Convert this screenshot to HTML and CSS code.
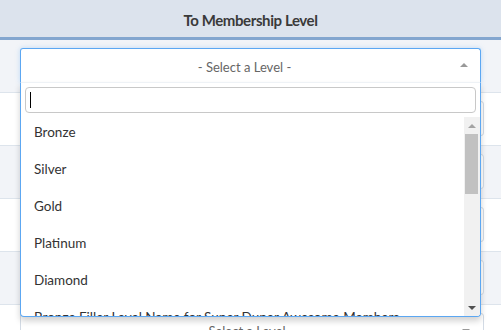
FILE: index.html
```html
<!DOCTYPE html>
<html>
<head>
<meta charset="utf-8">
<link rel="stylesheet" href="styles.css">
</head>
<body>
<div class="header">To Membership Level</div>
<div class="rows">
  <div class="row shaded">
    <div class="select open">
      <div class="selection"><span class="placeholder">- Select a Level -</span><span class="arrow up"></span></div>
      <div class="dropdown">
        <div class="search-wrap"><div class="search"><span class="caret"></span></div></div>
        <div class="results">
          <ul class="options">
            <li>Bronze</li>
            <li>Silver</li>
            <li>Gold</li>
            <li>Platinum</li>
            <li>Diamond</li>
            <li>Bronze Filler Level Name for Super Duper Awesome Members</li>
          </ul>
          <div class="scrollbar">
            <div class="sb-btn"><span class="tri-up"></span></div>
            <div class="sb-track"><div class="thumb"></div></div>
            <div class="sb-btn"><span class="tri-down"></span></div>
          </div>
        </div>
      </div>
    </div>
  </div>
  <div class="row"><div class="select"><span class="placeholder">- Select a Level -</span><span class="arrow down"></span></div></div>
  <div class="row shaded"><div class="select"><span class="placeholder">- Select a Level -</span><span class="arrow down"></span></div></div>
  <div class="row"><div class="select"><span class="placeholder">- Select a Level -</span><span class="arrow down"></span></div></div>
  <div class="row shaded"><div class="select"><span class="placeholder">- Select a Level -</span><span class="arrow down"></span></div></div>
  <div class="row"><div class="select"><span class="placeholder">- Select a Level -</span><span class="arrow down"></span></div></div>
</div>
</body>
</html>
```
FILE: styles.css
```css
* { box-sizing: border-box; }
html, body { margin: 0; padding: 0; }
body {
  width: 501px;
  height: 330px;
  overflow: hidden;
  background: #ffffff;
  font-family: Lato, "Open Sans", sans-serif;
  color: #333;
}
.header {
  height: 40px;
  background: #dce3ed;
  border-bottom: 3px solid #83a6cf;
  display: flex;
  align-items: center;
  justify-content: center;
  font-weight: 700;
  font-size: 15px;
  letter-spacing: -0.4px;
  color: #3a3a3a;
  padding-top: 3px;
}
.rows { display: flex; flex-direction: column; }
.row {
  height: 53px;
  flex: none;
  padding: 8px 17px 0 20px;
  border-bottom: 1px solid #dde4ec;
  background: #fff;
}
.row.shaded { background: #f2f4f8; }
.select {
  position: relative;
  height: 35px;
  border: 1px solid #d3dbe5;
  border-radius: 3px;
  background: #fff;
  display: flex;
  align-items: center;
  justify-content: center;
  padding-right: 10px;
}
.placeholder {
  font-size: 13px;
  color: #666;
  font-weight: 400;
}
.arrow {
  position: absolute;
  right: 13px;
  top: 15px;
  width: 0;
  height: 0;
  border-left: 4px solid transparent;
  border-right: 4px solid transparent;
}
.arrow.down { border-top: 4px solid #999; }
.arrow.up { border-bottom: 4px solid #999; top: 14px; right: 12px; }
.select.open {
  display: block;
  border: none;
  margin-right: 3px;
  padding-right: 0;
  height: 35px;
  z-index: 2;
  box-shadow: 0 0 5px rgba(93, 166, 240, 0.35);
}
.selection {
  height: 34px;
  border: 1px solid #5ca7f2;
  border-bottom: none;
  border-radius: 3px 3px 0 0;
  display: flex;
  align-items: center;
  justify-content: center;
  padding: 2px 12px 0 0;
  position: relative;
  background: #fff;
}
.dropdown {
  position: absolute;
  top: 34px;
  left: 0;
  right: 0;
  background: #fff;
  border: 1px solid #5ca7f2;
  border-top: 1px solid #eef2f6;
  border-radius: 0 0 4px 4px;
  box-shadow: 0 4px 6px rgba(0, 0, 0, 0.18);
  overflow: hidden;
}
.search-wrap { padding: 4px; }
.search {
  height: 26px;
  border: 1px solid #c8c8c8;
  border-radius: 4px;
  padding: 4px 0 0 4px;
}
.caret {
  display: block;
  width: 1px;
  height: 16px;
  background: #000;
}
.results {
  display: flex;
  height: 199px;
}
.options {
  flex: 1;
  list-style: none;
  margin: 0;
  padding: 0;
  overflow: hidden;
}
.options li {
  margin: 0;
  height: 37px;
  padding: 10px 13px;
  line-height: 17px;
  font-size: 13.5px;
  color: #333;
  white-space: nowrap;
  position: relative;
  top: -3px;
}
.scrollbar {
  width: 16px;
  flex: none;
  background: #f1f1f1;
  display: flex;
  flex-direction: column;
}
.sb-btn {
  height: 17px;
  display: flex;
  align-items: center;
  justify-content: center;
  padding-right: 1px;
}
.tri-up {
  width: 0; height: 0;
  border-left: 4px solid transparent;
  border-right: 4px solid transparent;
  border-bottom: 4px solid #a3a3a3;
}
.tri-down {
  width: 0; height: 0;
  border-left: 4px solid transparent;
  border-right: 4px solid transparent;
  border-top: 4px solid #505050;
}
.sb-track { flex: 1; padding: 0 2px 0 1px; }
.thumb {
  height: 60px;
  background: #c1c1c1;
}
```
